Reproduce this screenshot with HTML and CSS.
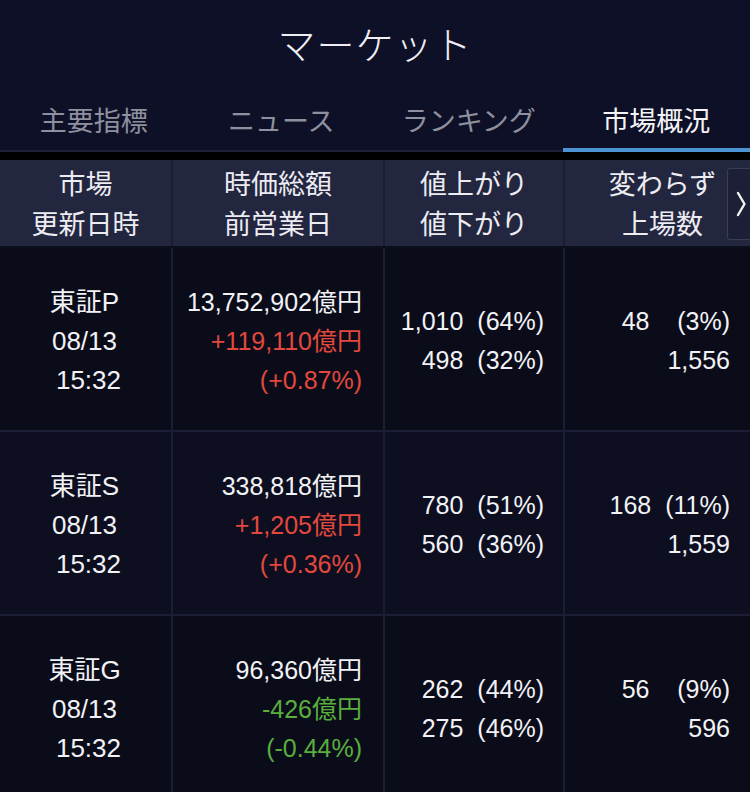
FILE: index.html
```html
<!DOCTYPE html>
<html lang="ja">
<head>
<meta charset="utf-8">
<title>マーケット</title>
<link rel="stylesheet" href="styles.css">
</head>
<body>
<div class="top">
  <h1 class="title">マーケット</h1>
  <nav class="tabs">
    <div class="tab">主要指標</div>
    <div class="tab">ニュース</div>
    <div class="tab">ランキング</div>
    <div class="tab active">市場概況</div>
  </nav>
</div>
<div class="gap"></div>
<div class="table">
  <div class="thead">
    <div class="th"><span>市場</span><span>更新日時</span></div>
    <div class="th"><span>時価総額</span><span>前営業日</span></div>
    <div class="th"><span>値上がり</span><span>値下がり</span></div>
    <div class="th last"><span>変わらず</span><span>上場数</span></div>
    <div class="more"><svg width="12" height="28" viewBox="0 0 12 28"><path d="M3 3 L9.5 14 L3 25" fill="none" stroke="#f2f2f6" stroke-width="2.4" stroke-linecap="round" stroke-linejoin="round"/></svg></div>
  </div>

  <div class="row">
    <div class="cell market"><span>東証P</span><span>08/13</span><span class="time">15:32</span></div>
    <div class="cell cap"><span>13,752,902億円</span><span class="up">+119,110億円</span><span class="up">(+0.87%)</span></div>
    <div class="cell num"><span>1,010  (64%)</span><span>498  (32%)</span></div>
    <div class="cell num last"><span>48    (3%)</span><span>1,556</span></div>
  </div>

  <div class="row">
    <div class="cell market"><span>東証S</span><span>08/13</span><span class="time">15:32</span></div>
    <div class="cell cap"><span>338,818億円</span><span class="up">+1,205億円</span><span class="up">(+0.36%)</span></div>
    <div class="cell num"><span>780  (51%)</span><span>560  (36%)</span></div>
    <div class="cell num last"><span>168  (11%)</span><span>1,559</span></div>
  </div>

  <div class="row">
    <div class="cell market"><span>東証G</span><span>08/13</span><span class="time">15:32</span></div>
    <div class="cell cap"><span>96,360億円</span><span class="down">-426億円</span><span class="down">(-0.44%)</span></div>
    <div class="cell num"><span>262  (44%)</span><span>275  (46%)</span></div>
    <div class="cell num last"><span>56    (9%)</span><span>596</span></div>
  </div>
</div>
</body>
</html>
```

FILE: styles.css
```css
* { box-sizing: border-box; }
html, body {
  margin: 0;
  padding: 0;
}
body {
  width: 750px;
  height: 792px;
  overflow: hidden;
  background: #0b0c19;
  color: #f2f2f6;
  font-family: "Liberation Sans", "Noto Sans CJK JP", sans-serif;
}
.top {
  background: #0e1027;
}
.title {
  margin: 0;
  height: 90px;
  padding-top: 17px;
  text-align: center;
  font-family: "Noto Sans CJK JP", sans-serif;
  font-weight: 300;
  font-size: 38px;
  line-height: 52px;
  letter-spacing: 1px;
  color: #eeeef4;
}
.tabs {
  display: grid;
  grid-template-columns: repeat(4, 1fr);
  height: 62px;
  border-bottom: 2px solid #1c2036;
}
.tab {
  display: flex;
  align-items: center;
  justify-content: center;
  padding-top: 1px;
  font-family: "Noto Sans CJK JP", sans-serif;
  font-size: 27px;
  color: #8f909f;
  border-bottom: 4px solid transparent;
  margin-bottom: -2px;
}
.tab.active {
  color: #f4f4f8;
  border-bottom-color: #4b93d2;
}
.gap {
  height: 8px;
  background: #000;
}
.thead {
  position: relative;
  display: grid;
  grid-template-columns: 173px 212px 180px 1fr;
  height: 88px;
  background: #23263f;
  border-bottom: 2px solid #0d0e1c;
}
.th {
  display: flex;
  flex-direction: column;
  align-items: center;
  justify-content: center;
  font-family: "Noto Sans CJK JP", sans-serif;
  font-size: 27px;
  line-height: 40px;
  color: #ececf2;
  border-right: 2px solid #1a1c31;
}
.th.last { border-right: none; padding-left: 10px; }
.more {
  position: absolute;
  right: 0;
  top: 8px;
  width: 23px;
  height: 72px;
  display: flex;
  align-items: center;
  justify-content: center;
  padding-left: 3px;
  background: #1c1f35;
  border: 1px solid #3a3d55;
  border-right: none;
  border-radius: 3px 0 0 3px;
}
.row {
  display: grid;
  grid-template-columns: 173px 212px 180px 1fr;
  height: 184px;
  border-bottom: 2px solid #1b1e36;
}
.row:nth-child(3) { background: #0d0f20; }
.cell {
  display: flex;
  flex-direction: column;
  justify-content: center;
  padding-top: 4px;
  font-size: 25px;
  line-height: 39px;
  border-right: 2px solid #1a1d33;
  white-space: pre;
}
.cell.last { border-right: none; }
.market {
  align-items: center;
  font-size: 26px;
  padding-right: 2px;
}
.market .time { padding-left: 8px; }
.cap {
  align-items: flex-end;
  padding-right: 21px;
}
.num {
  align-items: flex-end;
  padding-right: 19px;
}
.num.last { padding-right: 20px; }
.up { color: #e2483e; }
.down { color: #5aae3e; }
```
